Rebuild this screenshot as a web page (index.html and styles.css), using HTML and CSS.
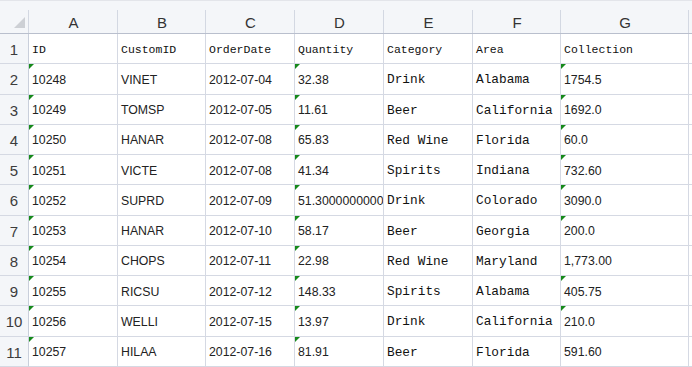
FILE: index.html
```html
<!DOCTYPE html>
<html lang="en">
<head>
    <meta charset="UTF-8">
    <meta name="viewport" content="width=device-width, initial-scale=1.0">
    <title>Orders Sheet</title>
    <link rel="stylesheet" href="styles.css">
</head>
<body>
    <div class="sheet">
        <div class="hd corner"><span class="corner-mark"></span></div>
        <div class="hd">A</div>
        <div class="hd">B</div>
        <div class="hd">C</div>
        <div class="hd">D</div>
        <div class="hd">E</div>
        <div class="hd">F</div>
        <div class="hd">G</div>
        <div class="hd rest"></div>

        <div class="num">1</div>
        <div class="cell head">ID</div>
        <div class="cell head">CustomID</div>
        <div class="cell head">OrderDate</div>
        <div class="cell head">Quantity</div>
        <div class="cell head">Category</div>
        <div class="cell head">Area</div>
        <div class="cell head">Collection</div>
        <div class="cell"></div>

        <div class="num">2</div>
        <div class="cell txt">10248</div>
        <div class="cell">VINET</div>
        <div class="cell">2012-07-04</div>
        <div class="cell txt">32.38</div>
        <div class="cell mono">Drink</div>
        <div class="cell mono">Alabama</div>
        <div class="cell txt">1754.5</div>
        <div class="cell"></div>

        <div class="num">3</div>
        <div class="cell txt">10249</div>
        <div class="cell">TOMSP</div>
        <div class="cell">2012-07-05</div>
        <div class="cell txt">11.61</div>
        <div class="cell mono">Beer</div>
        <div class="cell mono">California</div>
        <div class="cell txt">1692.0</div>
        <div class="cell"></div>

        <div class="num">4</div>
        <div class="cell txt">10250</div>
        <div class="cell">HANAR</div>
        <div class="cell">2012-07-08</div>
        <div class="cell txt">65.83</div>
        <div class="cell mono">Red Wine</div>
        <div class="cell mono">Florida</div>
        <div class="cell txt">60.0</div>
        <div class="cell"></div>

        <div class="num">5</div>
        <div class="cell txt">10251</div>
        <div class="cell">VICTE</div>
        <div class="cell">2012-07-08</div>
        <div class="cell txt">41.34</div>
        <div class="cell mono">Spirits</div>
        <div class="cell mono">Indiana</div>
        <div class="cell txt">732.60</div>
        <div class="cell"></div>

        <div class="num">6</div>
        <div class="cell txt">10252</div>
        <div class="cell">SUPRD</div>
        <div class="cell">2012-07-09</div>
        <div class="cell txt">51.3000000000</div>
        <div class="cell mono">Drink</div>
        <div class="cell mono">Colorado</div>
        <div class="cell txt">3090.0</div>
        <div class="cell"></div>

        <div class="num">7</div>
        <div class="cell txt">10253</div>
        <div class="cell">HANAR</div>
        <div class="cell">2012-07-10</div>
        <div class="cell txt">58.17</div>
        <div class="cell mono">Beer</div>
        <div class="cell mono">Georgia</div>
        <div class="cell txt">200.0</div>
        <div class="cell"></div>

        <div class="num">8</div>
        <div class="cell txt">10254</div>
        <div class="cell">CHOPS</div>
        <div class="cell">2012-07-11</div>
        <div class="cell txt">22.98</div>
        <div class="cell mono">Red Wine</div>
        <div class="cell mono">Maryland</div>
        <div class="cell">1,773.00</div>
        <div class="cell"></div>

        <div class="num">9</div>
        <div class="cell txt">10255</div>
        <div class="cell">RICSU</div>
        <div class="cell">2012-07-12</div>
        <div class="cell txt">148.33</div>
        <div class="cell mono">Spirits</div>
        <div class="cell mono">Alabama</div>
        <div class="cell txt">405.75</div>
        <div class="cell"></div>

        <div class="num">10</div>
        <div class="cell txt">10256</div>
        <div class="cell">WELLI</div>
        <div class="cell">2012-07-15</div>
        <div class="cell txt">13.97</div>
        <div class="cell mono">Drink</div>
        <div class="cell mono">California</div>
        <div class="cell txt">210.0</div>
        <div class="cell"></div>

        <div class="num">11</div>
        <div class="cell txt">10257</div>
        <div class="cell">HILAA</div>
        <div class="cell">2012-07-16</div>
        <div class="cell txt">81.91</div>
        <div class="cell mono">Beer</div>
        <div class="cell mono">Florida</div>
        <div class="cell">591.60</div>
        <div class="cell"></div>

        <div class="num"></div>
        <div class="cell txt"></div>
        <div class="cell"></div>
        <div class="cell"></div>
        <div class="cell txt"></div>
        <div class="cell"></div>
        <div class="cell"></div>
        <div class="cell txt"></div>
        <div class="cell"></div>
    </div>
</body>
</html>
```

FILE: styles.css
```css
* {
    box-sizing: border-box;
}
body {
    margin: 0;
    background: #fff;
    font-family: "Liberation Sans", Arial, sans-serif;
    color: #222;
    overflow: hidden;
}
.sheet {
    display: grid;
    grid-template-columns: 29px 89px 88px 89px 89px 89px 88px 128px 3px;
    grid-template-rows: 34px repeat(11, 30.25px) 2px;
    width: 692px;
    height: 367px;
    overflow: hidden;
}
.hd {
    display: flex;
    align-items: center;
    justify-content: center;
    padding-top: 10px;
    font-size: 15px;
    color: #333;
    background: #f4f6f9 linear-gradient(#d3d8e2, #d3d8e2) right bottom / 1px 23px no-repeat;
    border-top: 1px solid #e3e5ea;
    border-bottom: 1px solid #b9bfcd;
}
.corner {
    align-items: flex-end;
    justify-content: flex-end;
    padding: 0 4px 5px 0;
}
.corner-mark {
    width: 0;
    height: 0;
    border-left: 11px solid transparent;
    border-bottom: 11px solid #cdd0d5;
}
.rest {
    background: #f4f6f9;
}
.num {
    display: flex;
    align-items: center;
    justify-content: center;
    padding-top: 2px;
    font-size: 15px;
    color: #3c3c3c;
    background: #f4f6f9;
    border-right: 1px solid #c9cfdb;
    border-bottom: 1px solid #d5d9e3;
}
.cell {
    position: relative;
    display: flex;
    align-items: center;
    padding: 2px 0 0 3px;
    font-size: 12.3px;
    white-space: nowrap;
    overflow: hidden;
    border-right: 1px solid #d5d9e3;
    border-bottom: 1px solid #d5d9e3;
}
.head {
    font-family: "Liberation Mono", "Courier New", monospace;
    font-size: 11.5px;
    color: #111;
}
.mono {
    font-family: "Liberation Mono", "Courier New", monospace;
    font-size: 12.8px;
    color: #111;
}
.txt::before {
    content: "";
    position: absolute;
    top: 0;
    left: 0;
    width: 0;
    height: 0;
    border-top: 5px solid #16891b;
    border-right: 5px solid transparent;
}
```
